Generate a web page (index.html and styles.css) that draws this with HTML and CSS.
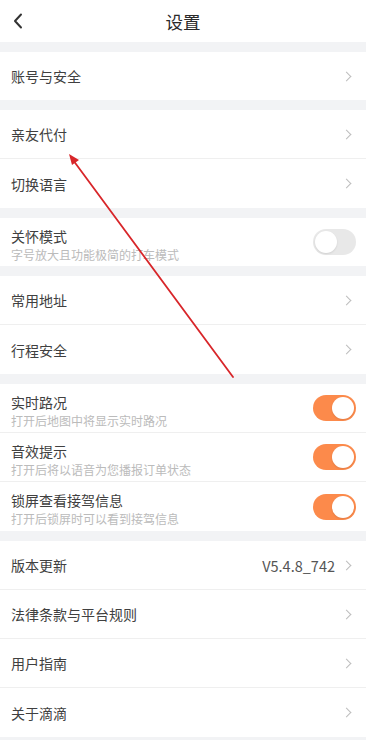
FILE: index.html
```html
<!DOCTYPE html>
<html lang="zh-CN">
<head>
    <meta charset="UTF-8" />
    <meta name="viewport" content="width=device-width, initial-scale=1.0" />
    <title>设置</title>
    <link rel="stylesheet" href="styles.css">
</head>
<body>
    <div class="page">
        <!-- top bar -->
        <div class="topbar">
            <svg class="back" width="10" height="16" viewBox="0 0 10 16">
                <path d="M8 1.5 L2 8 L8 14.5" fill="none" stroke="#333" stroke-width="2" stroke-linecap="round" stroke-linejoin="round"/>
            </svg>
            <h1>设置</h1>
        </div>

        <div class="group">
            <div class="row"><span class="label">账号与安全</span><i class="chev"></i></div>
        </div>

        <div class="group">
            <div class="row"><span class="label">亲友代付</span><i class="chev"></i></div>
            <div class="row"><span class="label">切换语言</span><i class="chev"></i></div>
        </div>

        <div class="group">
            <div class="row">
                <div class="texts">
                    <span class="label">关怀模式</span>
                    <span class="sub">字号放大且功能极简的打车模式</span>
                </div>
                <span class="switch"></span>
            </div>
        </div>

        <div class="group">
            <div class="row"><span class="label">常用地址</span><i class="chev"></i></div>
            <div class="row"><span class="label">行程安全</span><i class="chev"></i></div>
        </div>

        <div class="group">
            <div class="row">
                <div class="texts">
                    <span class="label">实时路况</span>
                    <span class="sub">打开后地图中将显示实时路况</span>
                </div>
                <span class="switch on"></span>
            </div>
            <div class="row">
                <div class="texts">
                    <span class="label">音效提示</span>
                    <span class="sub">打开后将以语音为您播报订单状态</span>
                </div>
                <span class="switch on"></span>
            </div>
            <div class="row">
                <div class="texts">
                    <span class="label">锁屏查看接驾信息</span>
                    <span class="sub">打开后锁屏时可以看到接驾信息</span>
                </div>
                <span class="switch on"></span>
            </div>
        </div>

        <div class="group">
            <div class="row"><span class="label">版本更新</span><span class="value">V5.4.8_742</span><i class="chev"></i></div>
            <div class="row"><span class="label">法律条款与平台规则</span><i class="chev"></i></div>
            <div class="row"><span class="label">用户指南</span><i class="chev"></i></div>
            <div class="row"><span class="label">关于滴滴</span><i class="chev"></i></div>
        </div>

        <!-- red annotation arrow drawn over the list -->
        <svg class="mark" width="366" height="740" viewBox="0 0 366 740">
            <line x1="233" y1="377" x2="73" y2="160" stroke="#d8262a" stroke-width="1.8" stroke-linecap="round"/>
            <polygon points="69,154 79,160 72,165" fill="#d8262a"/>
        </svg>
    </div>
</body>
</html>
```

FILE: styles.css
```css
body {
    margin: 0;
    padding: 0;
    background-color: #F2F3F5;
    font-family: "Noto Sans CJK SC", "Noto Sans", sans-serif;
    color: #404040;
}
.page {
    position: relative;
    width: 366px;
    height: 740px;
    overflow: hidden;
}

/* header */
.topbar {
    height: 42px;
    background-color: #FFFFFF;
    display: flex;
    align-items: center;
    justify-content: center;
    position: relative;
}
.topbar h1 {
    margin: 0;
    font-size: 17.5px;
    font-weight: 400;
    color: #2a2a2a;
}
.back {
    position: absolute;
    left: 13px;
    top: 13px;
}

/* list groups */
.group {
    background-color: #FFFFFF;
    margin-top: 10px;
}
.row {
    height: 49px;
    box-sizing: border-box;
    padding: 0 14px 0 11px;
    display: flex;
    align-items: center;
    border-bottom: 1px solid #EFEFEF;
}
.row:last-child {
    border-bottom: none;
}
.group:first-of-type .row,
.group .row:only-child {
    height: 48px;
}
.label {
    flex: 1;
    font-size: 14px;
    line-height: 20px;
    color: #404040;
}
.texts {
    flex: 1;
    display: flex;
    flex-direction: column;
    padding-top: 4px;
}
.texts .label {
    flex: none;
}
.sub {
    font-size: 12px;
    line-height: 17px;
    color: #BBBBBB;
}
.value {
    font-size: 14.5px;
    color: #555555;
    margin-right: 8px;
}

/* small right chevron */
.chev {
    width: 6px;
    height: 6px;
    border-top: 1px solid #BDBDBD;
    border-right: 1px solid #BDBDBD;
    transform: rotate(45deg);
    margin-right: 2px;
}

/* toggle switch */
.switch {
    width: 43px;
    height: 26px;
    border-radius: 13px;
    background-color: #E8E8E8;
    position: relative;
    flex: none;
    margin-right: -4px;
}
.switch::after {
    content: "";
    position: absolute;
    top: 2px;
    left: 2px;
    width: 22px;
    height: 22px;
    border-radius: 50%;
    background-color: #FFFFFF;
    box-shadow: 0 1px 2px rgba(0,0,0,0.1);
}
.switch.on {
    background-color: #FC8A4B;
}
.switch.on::after {
    left: auto;
    right: 2px;
}

/* annotation */
.mark {
    position: absolute;
    top: 0;
    left: 0;
    pointer-events: none;
}
```
